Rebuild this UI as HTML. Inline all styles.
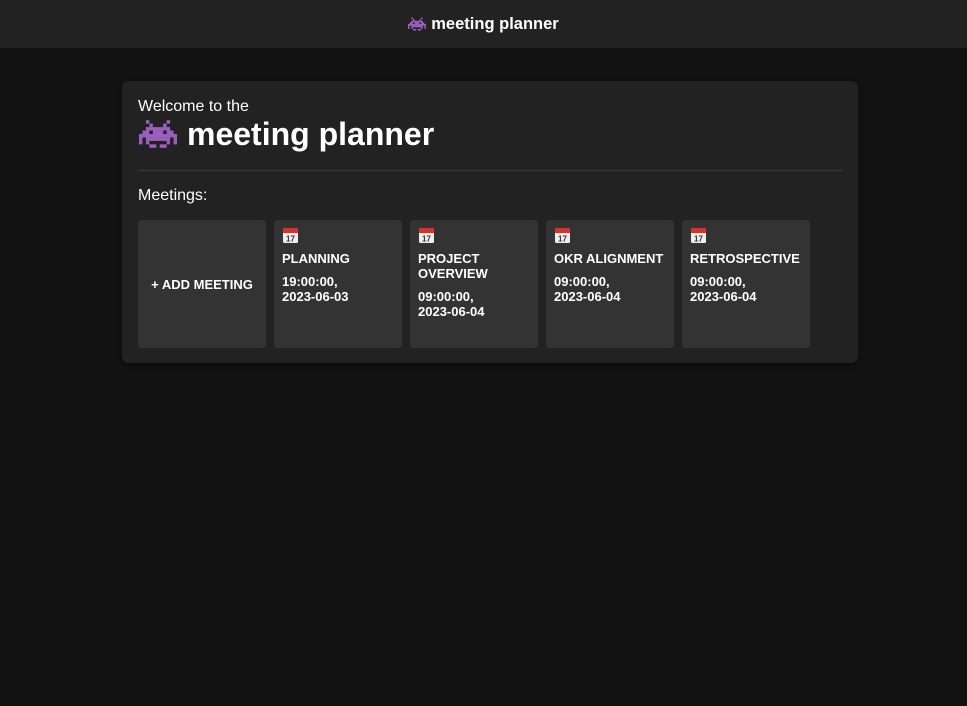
<!DOCTYPE html>
<html><head><meta charset="utf-8"><style>
*{box-sizing:border-box;margin:0;padding:0}
body{width:967px;height:706px;background:#121212;font-family:"Liberation Sans","DejaVu Sans",sans-serif;color:#fff;overflow:hidden}
.hdr{height:48px;background:#222;display:flex;align-items:center;justify-content:center;font-weight:bold;font-size:16.5px;gap:5px}
.card{position:absolute;left:122px;top:81px;width:736px;height:282px;background:#222;border-radius:7px;padding:16px;box-shadow:0 2px 6px rgba(0,0,0,.4)}
.w{font-size:16px;line-height:18px;margin-top:1px}
.t{font-size:32px;font-weight:bold;display:flex;align-items:center;gap:10px;height:34px;margin-top:1px}
hr{border:0;border-top:1px solid #3a3a3a;margin:19px 0 0}
.m{font-size:16px;margin-top:16px;line-height:18px}
.tiles{display:flex;gap:8px;margin-top:15px}
.tile{width:128px;height:128px;background:#333;border-radius:4px;padding:8px;font-weight:bold;font-size:13px;line-height:15px}
.add{display:flex;align-items:center;justify-content:center}
.cal{display:block;margin:0 0 8px 1px}
.n{margin-bottom:8px}
</style></head><body>
<svg width="0" height="0" style="position:absolute"><defs>
<g id="inv" fill="#9d5fbf">
<rect x="2" y="0" width="1" height="1"/><rect x="8" y="0" width="1" height="1"/>
<rect x="3" y="1" width="1" height="1"/><rect x="7" y="1" width="1" height="1"/>
<rect x="2" y="2" width="7" height="1"/>
<rect x="1" y="3" width="2" height="1"/><rect x="4" y="3" width="3" height="1"/><rect x="8" y="3" width="2" height="1"/>
<rect x="0" y="4" width="11" height="1"/>
<rect x="0" y="5" width="1" height="1"/><rect x="2" y="5" width="7" height="1"/><rect x="10" y="5" width="1" height="1"/>
<rect x="0" y="6" width="1" height="1"/><rect x="2" y="6" width="1" height="1"/><rect x="8" y="6" width="1" height="1"/><rect x="10" y="6" width="1" height="1"/>
<rect x="3" y="7" width="2" height="1"/><rect x="6" y="7" width="2" height="1"/>
</g>
<g id="cal"><rect x="0" y="0" width="15" height="15" rx="1.5" fill="#eee"/><rect x="0" y="0" width="15" height="5" rx="1.5" fill="#d9302c"/><rect x="0" y="3" width="15" height="2" fill="#d9302c"/><text x="7.5" y="13.5" font-size="8" font-weight="bold" text-anchor="middle" fill="#333" font-family="Liberation Sans,sans-serif">17</text></g>
</defs></svg>
<div class="hdr"><svg width="18" height="14" viewBox="0 0 11 8"><use href="#inv"/></svg>meeting planner</div>
<div class="card">
<div class="w">Welcome to the</div>
<div class="t"><svg width="38" height="30" viewBox="0 0 11 8" style="margin-left:1px"><use href="#inv"/></svg>meeting planner</div>
<hr>
<div class="m">Meetings:</div>
<div class="tiles">
<div class="tile add">+ ADD MEETING</div>
<div class="tile"><svg class="cal" width="15" height="15"><use href="#cal"/></svg><div class="n">PLANNING</div><div>19:00:00,<br>2023-06-03</div></div>
<div class="tile"><svg class="cal" width="15" height="15"><use href="#cal"/></svg><div class="n">PROJECT<br>OVERVIEW</div><div>09:00:00,<br>2023-06-04</div></div>
<div class="tile"><svg class="cal" width="15" height="15"><use href="#cal"/></svg><div class="n">OKR ALIGNMENT</div><div>09:00:00,<br>2023-06-04</div></div>
<div class="tile"><svg class="cal" width="15" height="15"><use href="#cal"/></svg><div class="n">RETROSPECTIVE</div><div>09:00:00,<br>2023-06-04</div></div>
</div>
</div>
</body></html>
